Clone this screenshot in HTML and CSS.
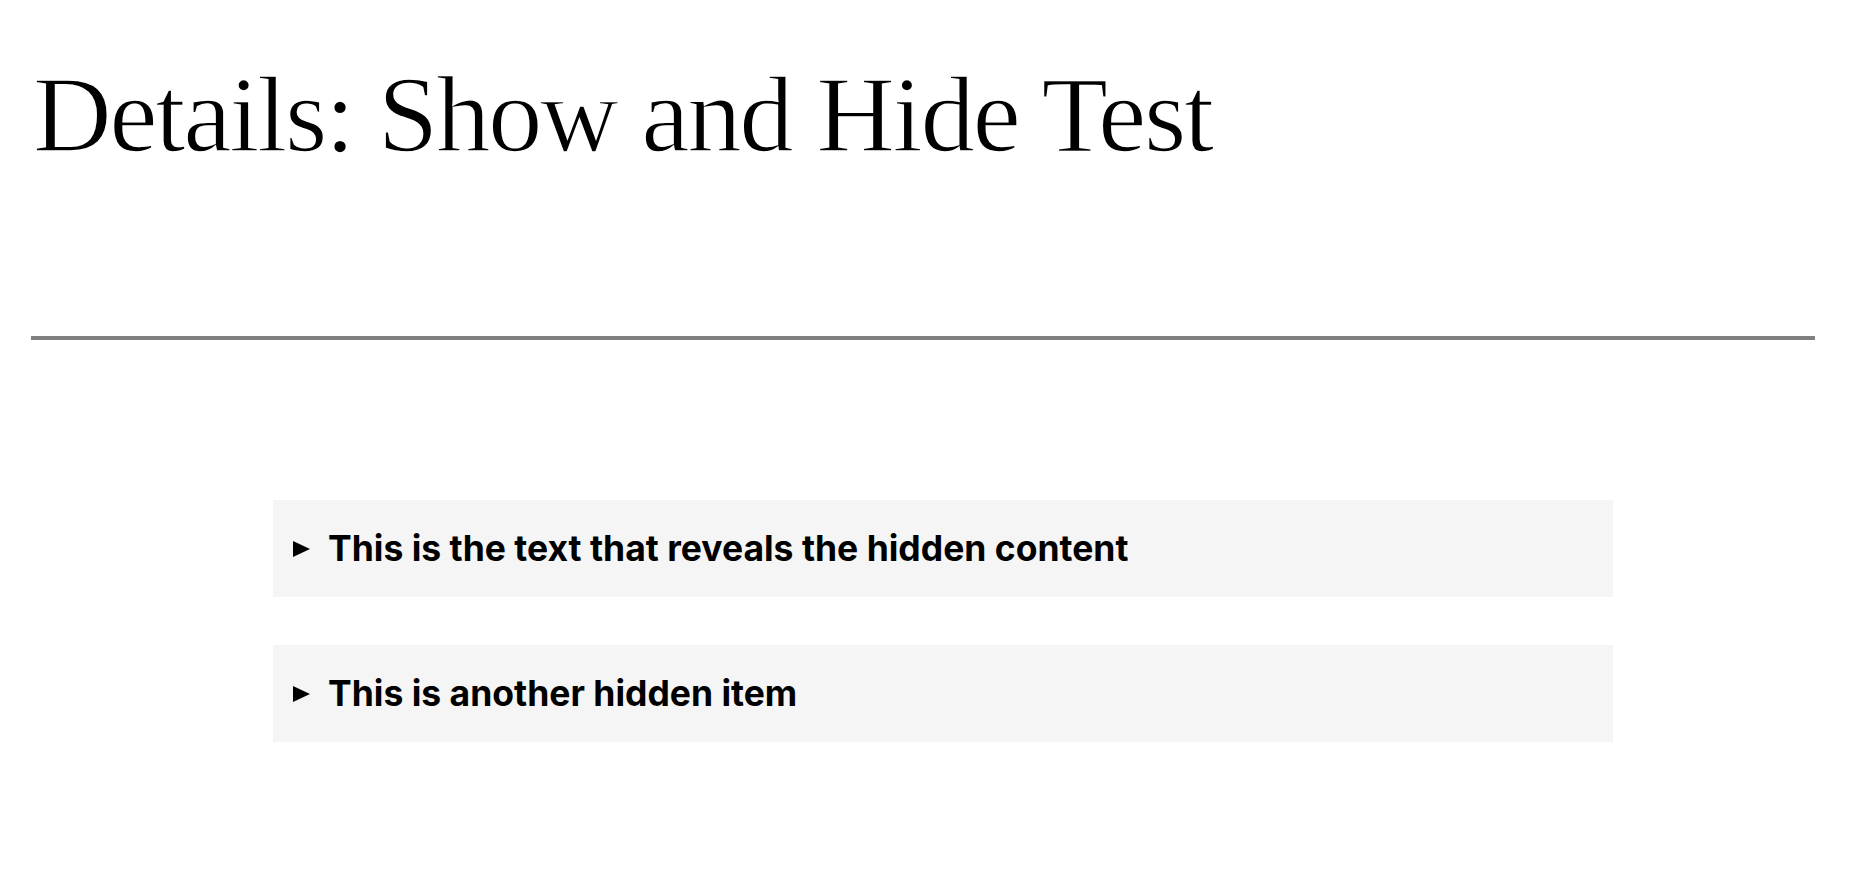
FILE: index.html
```html
<!DOCTYPE html>
<html lang="en">
<head>
<meta charset="utf-8">
<title>Details: Show and Hide Test</title>
<link rel="stylesheet" href="styles.css">
</head>
<body>
<header class="page-header">
  <h1 class="page-title">Details: Show and Hide Test</h1>
</header>
<hr class="divider">
<main class="content">
  <details class="disclosure">
    <summary class="disclosure-summary">This is the text that reveals the hidden content</summary>
    <p>Hidden content goes here.</p>
  </details>
  <details class="disclosure">
    <summary class="disclosure-summary">This is another hidden item</summary>
    <p>More hidden content.</p>
  </details>
</main>
</body>
</html>
```
FILE: styles.css
```css
html, body {
  margin: 0;
  padding: 0;
  background: #ffffff;
  color: #000000;
}

body {
  font-family: "Inter", "Noto Sans", sans-serif;
}

.page-header {
  padding: 50px 31px 0 33px;
}

.page-title {
  margin: 0;
  font-family: "Liberation Serif", "DejaVu Serif", serif;
  font-weight: 400;
  font-size: 109px;
  line-height: 130px;
  letter-spacing: -2.4px;
  -webkit-text-stroke: 1.5px #ffffff;
}

.divider {
  margin: 156px 35px 0 31px;
  border: 0;
  height: 4px;
  background: #808080;
}

.content {
  display: flex;
  flex-direction: column;
  gap: 48px;
  padding: 160px 237px 0 273px;
}

.disclosure {
  background: #f5f5f5;
}

.disclosure-summary {
  display: flex;
  align-items: center;
  gap: 18px;
  height: 97px;
  padding: 0 20px;
  font-size: 35.5px;
  font-weight: 700;
  cursor: pointer;
  list-style: none;
}

.disclosure-summary::-webkit-details-marker {
  display: none;
}

.disclosure-summary::before {
  content: "";
  width: 0;
  height: 0;
  border-top: 8.5px solid transparent;
  border-bottom: 8.5px solid transparent;
  border-left: 17px solid #000;
  flex: none;
}
```
